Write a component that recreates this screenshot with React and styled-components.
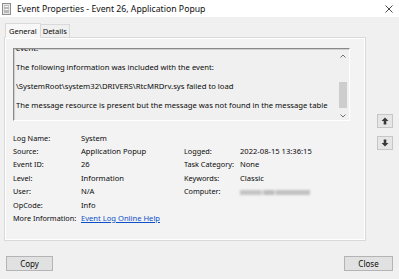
import React from "react";
import styled, { createGlobalStyle } from "styled-components";

const Global = createGlobalStyle`
  html, body { margin: 0; padding: 0; background: #f0f0f0; }
  body { font-family: "Noto Sans", "Open Sans", sans-serif; font-size: 7.6px; color: #0a0a0a; }
`;

const Window = styled.div`
  width: 399px;
  height: 279px;
  display: flex;
  flex-direction: column;
  background: #f0f0f0;
  overflow: hidden;
`;

const TitleBar = styled.div`
  height: 17px;
  background: #ffffff;
  display: flex;
  align-items: center;
  padding: 0 2px 0 2px;
  flex-shrink: 0;
`;

const TitleText = styled.div`
  margin-left: 6px;
  font-size: 8.7px;
  color: #111;
  flex: 1;
`;

const CloseX = styled.div`
  width: 16px;
  display: flex;
  justify-content: center;
  align-items: center;
`;

const Body = styled.div`
  flex: 1;
  display: flex;
  flex-direction: column;
  padding: 5px 6px 0 4px;
`;

const TabRow = styled.div`
  display: flex;
  align-items: flex-end;
  height: 15px;
  padding-left: 1px;
  position: relative;
  z-index: 1;
`;

const Tab = styled.div`
  height: ${p => (p.$active ? 15 : 13)}px;
  padding: 0 ${p => (p.$active ? 3 : 2)}px;
  display: flex;
  align-items: center;
  background: ${p => (p.$active ? "#f7f7f7" : "#f0f0f0")};
  border: 1px solid #d9d9d9;
  border-bottom: ${p => (p.$active ? "1px solid #f7f7f7" : "none")};
  border-left: ${p => (p.$active ? "1px solid #d9d9d9" : "none")};
  margin-bottom: ${p => (p.$active ? -1 : 0)}px;
  box-sizing: border-box;
  font-size: 7.5px;
`;

const Main = styled.div`
  display: flex;
  align-items: flex-start;
`;

const Panel = styled.div`
  width: 362px;
  height: 204px;
  box-sizing: border-box;
  border: 1px solid #d9d9d9;
  box-shadow: inset 0 0 0 1px #ffffff;
  background: #f3f3f3;
  padding: 10px 0 0 8px;
  display: flex;
  flex-direction: column;
`;

const TextBox = styled.div`
  width: 337px;
  height: 73px;
  box-sizing: border-box;
  border-top: 1px solid #8a8a8a;
  border-left: 1px solid #8a8a8a;
  border-right: 1px solid #ffffff;
  border-bottom: 1px solid #ffffff;
  box-shadow: inset 1px 1px 0 #d0d0d0;
  background: #f0f0f0;
  display: flex;
  overflow: hidden;
`;

const TextArea = styled.div`
  flex: 1;
  overflow: hidden;
  padding-left: 2px;
`;

const TextScroll = styled.div`
  margin-top: -7px;
`;

const Para = styled.p`
  margin: 0 0 7px 0;
  line-height: 12px;
  font-size: 7.7px;
  white-space: nowrap;
`;

const ScrollBar = styled.div`
  width: 10px;
  display: flex;
  flex-direction: column;
  align-items: center;
  margin-right: 1px;
  padding-top: 3px;
`;

const ScrollArrow = styled.div`
  height: 8px;
  display: flex;
  align-items: center;
  justify-content: center;
`;

const Track = styled.div`
  flex: 1;
  width: 8px;
  position: relative;
`;

const Thumb = styled.div`
  position: absolute;
  left: 0;
  width: 8px;
  background: #cdcdcd;
`;

const Fields = styled.div`
  display: grid;
  grid-template-columns: 68px 103px 56px 1fr;
  grid-auto-rows: 13.4px;
  align-items: center;
  margin-top: 10px;
`;

const Label = styled.div`
  white-space: nowrap;
  font-size: 7.3px;
`;

const Value = styled.div`
  white-space: nowrap;
`;

const Link = styled.a`
  color: #0b50c8;
  text-decoration: underline;
  white-space: nowrap;
`;

const Blurred = styled.span`
  display: inline-block;
  width: 70px;
  height: 5px;
  background: linear-gradient(90deg, #c4c4c4 0 30%, #d8d8d8 30% 34%, #bdbdbd 34% 48%, #dadada 48% 52%, #c2c2c2 52% 100%);
  filter: blur(0.8px);
  vertical-align: middle;
`;

const Side = styled.div`
  display: flex;
  flex-direction: column;
  gap: 8px;
  margin-left: 11px;
  margin-top: 77px;
`;

const ArrowButton = styled.div`
  width: 16px;
  height: 14px;
  box-sizing: border-box;
  border: 1px solid #c6c6c6;
  background: #e6e6e6;
  display: flex;
  align-items: center;
  justify-content: center;
`;

const ButtonRow = styled.div`
  display: flex;
  justify-content: space-between;
  margin-top: 15px;
  padding-left: 2px;
`;

const Button = styled.div`
  width: ${p => p.$w}px;
  height: 15px;
  box-sizing: border-box;
  border: 1px solid #b4b4b4;
  background: #e1e1e1;
  display: flex;
  align-items: center;
  justify-content: center;
  font-size: 8px;
`;

const Row = ({ label, value, label2, value2 }) => (
  <>
    <Label>{label}</Label>
    <Value>{value}</Value>
    <Label>{label2}</Label>
    <Value>{value2}</Value>
  </>
);

export default function App() {
  return (
    <Window>
      <Global />
      <TitleBar>
        <svg width="9" height="12" viewBox="0 0 9 12">
          <rect x="0.5" y="0.5" width="8" height="11" fill="#e8e8e8" stroke="#8c8c8c" />
          <rect x="2" y="2" width="5" height="8" fill="#b8b8b8" />
          <rect x="2.5" y="3" width="4" height="1" fill="#f4f4f4" />
          <rect x="2.5" y="6" width="4" height="1" fill="#f4f4f4" />
        </svg>
        <TitleText>Event Properties - Event 26, Application Popup</TitleText>
        <CloseX>
          <svg width="8" height="8" viewBox="0 0 8 8">
            <path d="M0.5 0.5 L7.5 7.5 M7.5 0.5 L0.5 7.5" stroke="#333" strokeWidth="0.9" />
          </svg>
        </CloseX>
      </TitleBar>
      <Body>
        <TabRow>
          <Tab $active>General</Tab>
          <Tab>Details</Tab>
        </TabRow>
        <Main>
          <Panel>
            <TextBox>
              <TextArea>
                <TextScroll>
                  <Para>event.</Para>
                  <Para>The following information was included with the event:</Para>
                  <Para>\SystemRoot\system32\DRIVERS\RtcMRDrv.sys failed to load</Para>
                  <Para>The message resource is present but the message was not found in the message table</Para>
                </TextScroll>
              </TextArea>
              <ScrollBar>
                <ScrollArrow>
                  <svg width="6" height="4" viewBox="0 0 6 4">
                    <path d="M0.5 3.5 L3 1 L5.5 3.5" fill="none" stroke="#707070" strokeWidth="1" />
                  </svg>
                </ScrollArrow>
                <Track>
                  <Thumb style={{ top: "22px", height: "26px" }} />
                </Track>
                <ScrollArrow>
                  <svg width="6" height="4" viewBox="0 0 6 4">
                    <path d="M0.5 0.5 L3 3 L5.5 0.5" fill="none" stroke="#707070" strokeWidth="1" />
                  </svg>
                </ScrollArrow>
              </ScrollBar>
            </TextBox>
            <Fields>
              <Row label="Log Name:" value="System" label2="" value2="" />
              <Row label="Source:" value="Application Popup" label2="Logged:" value2="2022-08-15 13:36:15" />
              <Row label="Event ID:" value="26" label2="Task Category:" value2="None" />
              <Row label="Level:" value="Information" label2="Keywords:" value2="Classic" />
              <Row label="User:" value="N/A" label2="Computer:" value2={<Blurred />} />
              <Row label="OpCode:" value="Info" label2="" value2="" />
              <Label>More Information:</Label>
              <Value><Link>Event Log Online Help</Link></Value>
              <Label />
              <Value />
            </Fields>
          </Panel>
          <Side>
            <ArrowButton>
              <svg width="8" height="8" viewBox="0 0 8 8">
                <path d="M4 0.5 L7.5 4 L5.3 4 L5.3 7.5 L2.7 7.5 L2.7 4 L0.5 4 Z" fill="#3a3a3a" />
              </svg>
            </ArrowButton>
            <ArrowButton>
              <svg width="8" height="8" viewBox="0 0 8 8">
                <path d="M4 7.5 L7.5 4 L5.3 4 L5.3 0.5 L2.7 0.5 L2.7 4 L0.5 4 Z" fill="#3a3a3a" />
              </svg>
            </ArrowButton>
          </Side>
        </Main>
        <ButtonRow>
          <Button $w={47}>Copy</Button>
          <Button $w={49}>Close</Button>
        </ButtonRow>
      </Body>
    </Window>
  );
}
